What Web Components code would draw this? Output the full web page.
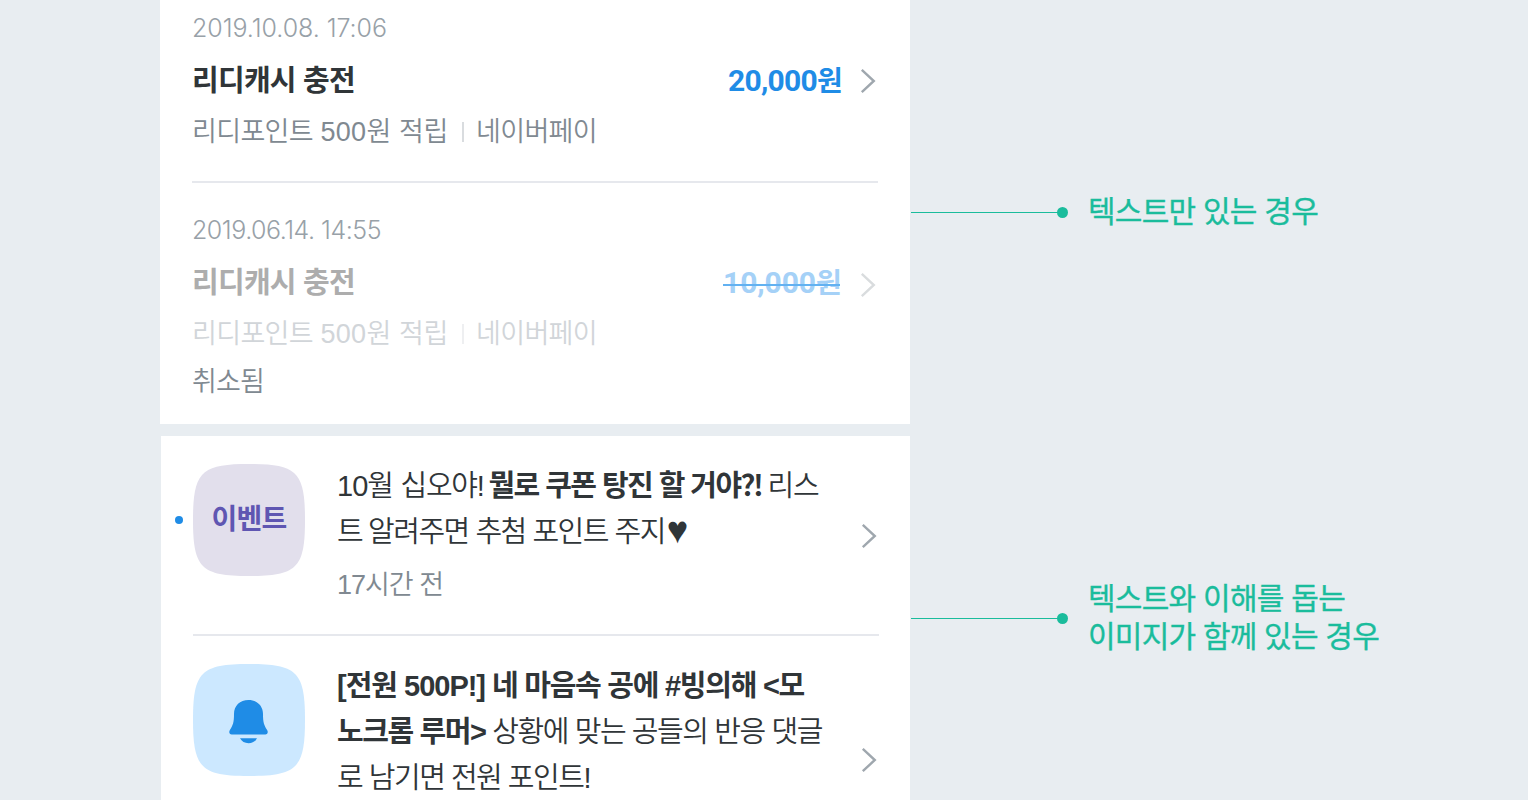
<!DOCTYPE html>
<html lang="ko">
<head>
<meta charset="utf-8">
<title>리스트</title>
<style>
html,body{margin:0;height:100%;overflow:hidden;background:#e8edf1}
body{font-family:"Liberation Sans","Noto Sans CJK KR",sans-serif}
</style>
</head>
<body>
<list-page></list-page>
<script>
const define=(name,html,setup)=>customElements.define(name,class extends HTMLElement{
  connectedCallback(){
    if(this.shadowRoot)return;
    const t=document.createElement('template');t.innerHTML=html;
    this.attachShadow({mode:'open'}).append(t.content.cloneNode(true));
    if(setup)setup(this);
  }
});

/* A run of text, tracked so that its advance equals the w attribute; g is the gap before it. */
define('fit-text',`<style>:host{display:block;white-space:nowrap;width:max-content}</style><slot></slot>`,el=>{
  const w=+el.getAttribute('w');
  const n=[...el.textContent].length;
  const s=(w-el.getBoundingClientRect().width)/n;
  el.style.letterSpacing=s.toFixed(3)+'px';
  if(el.hasAttribute('g'))el.style.marginLeft=el.getAttribute('g')+'px';
});

define('text-row',`<style>:host{display:flex;align-items:baseline}</style><slot></slot>`);

define('chevron-icon',`<style>:host{display:block;width:16px;height:26px;color:#9fa7ae}svg{display:block}</style>
<svg width="16" height="26" viewBox="0 0 16 26" fill="none" stroke="currentColor" stroke-width="2.4"><path d="M1.800 1.800 13.800 13 1.800 24.200"/></svg>`);

define('cash-row',`<style>
:host{display:block;box-sizing:border-box;height:202px;padding:0 2px 0 0}
:host([last]){height:243px}
.date{font:300 25px/30px Inter,sans-serif;color:#98a1a8;padding-top:12.500px;height:29.500px}
.main{display:flex;align-items:center;height:30px;margin-top:24px}
.title{font-size:29px;line-height:30px;font-weight:700;color:#303538}
.amount{font:700 30px/30px Roboto,"Noto Sans CJK KR",sans-serif;color:#1f8ce6;margin:0 18px 0 auto}
.desc{display:flex;align-items:center;height:30px;margin-top:21px;font-size:27px;line-height:30px;font-weight:350;color:#808991}
i{width:2px;height:20px;background:#d9dcdf;margin:-1px 12px 0 14px}
.state{font-size:27px;line-height:30px;font-weight:350;color:#808991;margin-top:18px}
:host([off]) .title{color:#adadad}
:host([off]) .desc{color:#d1d5d9}
:host([off]) i{background:#eeeff1}
:host([off]) .amount{color:#a5d1f7;margin-right:20px}
:host([off]) chevron-icon{color:#d9dcde;position:relative;top:2px}
</style>
<div class="date"><slot name="date"></slot></div>
<div class="main"><div class="title"><slot name="title"></slot></div><div class="amount"><slot name="amount"></slot></div><chevron-icon></chevron-icon></div>
<div class="desc"><slot name="point"></slot><i></i><slot name="pay"></slot></div>
<div class="state"><slot name="state"></slot></div>`);

define('strike-text',`<style>:host{display:block;position:relative;width:max-content}
:host::after{content:"";position:absolute;left:0;right:0;top:16px;height:2px;background:#62b1f1}</style><slot></slot>`);

define('squircle-tile',`<style>
:host{display:grid;width:112px;height:112px;color:#e2dfec}
svg{grid-area:1/1}
.in{grid-area:1/1;place-self:center}
</style><svg width="112" height="112" viewBox="0 0 112 112"><path fill="currentColor" d="M0 56C0 8 8 0 56 0S112 8 112 56 104 112 56 112 0 104 0 56Z"/></svg><div class="in"><slot></slot></div>`);

define('bell-icon',`<style>:host{display:block;width:40px;height:44px;padding-top:3px}svg{display:block}</style>
<svg width="40" height="44" viewBox="0 0 40 44" fill="#1f8ce6"><path d="M19.500 0C11 0 5 5.600 5 14C5 22 4.100 25 .9 30C-.4 32.200 .4 34.500 2.700 34.500H36.300C38.600 34.500 39.400 32.200 38.100 30C34.900 25 34 22 34 14C34 5.600 28 0 19.500 0Z"/><path d="M11 38.300H28C26.300 41.500 23.300 43.200 19.500 43.200S12.700 41.500 11 38.300Z"/></svg>`);

define('notice-row',`<style>
:host{display:flex;align-items:flex-start;position:relative}
.text{margin:-1px 0 0 32px;flex:1;font-size:29px;line-height:46px;color:#303538;font-weight:350}
.arrow{margin-right:2px}
.dot{position:absolute;left:-18px;top:52px;width:8px;height:8px;border-radius:50%;background:#1f8ce6;display:none}
:host([unread]) .dot{display:block}
</style><span class="dot"></span><slot name="tile"></slot><div class="text"><slot></slot></div><div class="arrow"><slot name="arrow"></slot></div>`);

define('call-out',`<style>
:host{display:flex;align-items:center;color:#1abc9c;font-size:30px;line-height:38px;font-weight:400;-webkit-text-stroke:.35px #1abc9c}
.line{width:147px;height:1px;background:#1abc9c}
.dot{width:11px;height:11px;border-radius:50%;background:#1abc9c;margin:0 20px 0 -1px}
</style><span class="line"></span><span class="dot"></span><div><slot></slot></div>`);

define('list-page',`<style>
:host{display:grid;grid-template-columns:750px 1fr;padding-left:160px;height:800px;overflow:hidden;background:#e8edf1}
.cards{display:flex;flex-direction:column;gap:12px}
.a{background:#fff;height:424px;box-sizing:border-box;padding:0 32px}
hr{border:0;height:2px;margin:0;background:#e6e8ed}
.a hr{margin-top:-21px;margin-bottom:19px}
.b{background:#fff;height:364px;box-sizing:border-box;margin-left:1px;padding:28px 31px 0 32px}
.b hr{margin:0 0 28px}
.first{height:170px}
.sub{color:#808991;font-size:27px;margin-top:7px}
.tag{font-size:28px;font-weight:700;color:#5f56b2;line-height:30px}
.won{font-size:28px}
.mark{font-family:"Noto Sans CJK KR",sans-serif;line-height:36px}
.heart{display:inline-block;transform:translateY(-2px) scale(1.25,1.32);margin-left:4px}
b{font-weight:700}
.n1{margin-top:193px}
.n2{margin-top:349px}
.notes{padding-left:1px}
</style>
<div class="cards">
<section class="a">
<cash-row>
<fit-text slot="date" w="195">2019.10.08. 17:06</fit-text>
<fit-text slot="title" w="163">리디캐시 충전</fit-text>
<text-row slot="amount"><fit-text w="89">20,000</fit-text><fit-text class="won" w="25">원</fit-text></text-row>
<text-row slot="point"><fit-text w="121">리디포인트</fit-text><fit-text w="71" g="7.5">500원</fit-text><fit-text w="49" g="7.5">적립</fit-text></text-row>
<fit-text slot="pay" w="121">네이버페이</fit-text>
</cash-row>
<hr>
<cash-row off last>
<fit-text slot="date" w="189">2019.06.14. 14:55</fit-text>
<fit-text slot="title" w="163">리디캐시 충전</fit-text>
<strike-text slot="amount"><text-row><fit-text w="93">10,000</fit-text><fit-text class="won" w="24">원</fit-text></text-row></strike-text>
<text-row slot="point"><fit-text w="121">리디포인트</fit-text><fit-text w="71" g="7.5">500원</fit-text><fit-text w="49" g="7.5">적립</fit-text></text-row>
<fit-text slot="pay" w="121">네이버페이</fit-text>
<fit-text slot="state" w="72">취소됨</fit-text>
</cash-row>
</section>
<section class="b">
<notice-row class="first" unread>
<squircle-tile slot="tile"><fit-text class="tag" w="75">이벤트</fit-text></squircle-tile>
<text-row><fit-text w="56">10월</fit-text><fit-text w="83" g="7.5">십오야!</fit-text><fit-text w="252" g="5"><b>뭘로 쿠폰 탕진 할 거야</b></fit-text><fit-text class="mark" w="21" g="0"><b>?!</b></fit-text><fit-text w="51" g="6">리스</fit-text></text-row>
<text-row><fit-text w="25">트</fit-text><fit-text w="297" g="6">알려주면 추첨 포인트 주지</fit-text><span class="heart">♥</span></text-row>
<fit-text class="sub" w="106">17시간 전</fit-text>
<chevron-icon slot="arrow" style="margin-top:59px"></chevron-icon>
</notice-row>
<hr>
<notice-row>
<squircle-tile slot="tile" style="color:#cce8ff"><bell-icon></bell-icon></squircle-tile>
<text-row><fit-text w="148"><b>[전원 500P!]</b></fit-text><fit-text w="312" g="7"><b>네 마음속 공에 #빙의해 &lt;모</b></fit-text></text-row>
<fit-text w="485"><b>노크롬 루머&gt;</b> 상황에 맞는 공들의 반응 댓글</fit-text>
<fit-text w="253">로 남기면 전원 포인트!</fit-text>
<chevron-icon slot="arrow" style="margin-top:83px"></chevron-icon>
</notice-row>
</section>
</div>
<div class="notes">
<call-out class="n1"><fit-text w="230">텍스트만 있는 경우</fit-text></call-out>
<call-out class="n2"><fit-text w="257">텍스트와 이해를 돕는</fit-text><fit-text w="291">이미지가 함께 있는 경우</fit-text></call-out>
</div>`);
</script>
</body>
</html>
